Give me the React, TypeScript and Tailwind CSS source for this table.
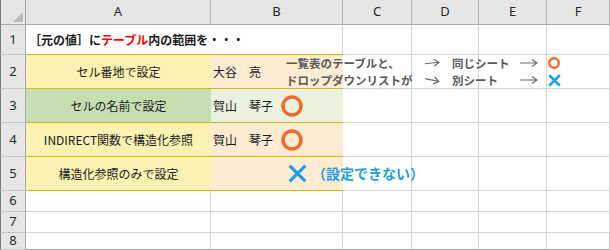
import type { ReactNode } from 'react';

// Spreadsheet widths (each includes its 1px right border)
// row header 26 | A 185 | B 132 | C 69 | D 67 | E 68 | F 63

const hdrCell =
  'flex items-center justify-center bg-[#e6e6e6] border-r border-b border-r-[#b4b4b4] border-b-[#a9a9a9] text-[13px] text-[#262626]';
const rowHdr =
  'flex w-[26px] shrink-0 items-center justify-center border-l border-r border-b border-l-[#6f7f75] border-r-[#a9a9a9] border-b-[#c6c6c6] bg-[#e6e6e6] text-[13px] text-[#262626] font-["Noto_Sans",sans-serif]';
const grid = 'border-r border-b border-[#d4d4d4]';

function Arrow({ className }: { className?: string }) {
  return (
    <svg width="16" height="10" viewBox="0 0 16 10" className={className}>
      <path d="M1 5H15M10 1.5L15 5L10 8.5" fill="none" stroke="#6a6a6a" strokeWidth="1.2" />
    </svg>
  );
}

function LongArrow() {
  return (
    <svg width="19" height="10" viewBox="0 0 19 10" className="shrink-0">
      <path d="M1 5H18M13 1.5L18 5L13 8.5" fill="none" stroke="#6a6a6a" strokeWidth="1.2" />
    </svg>
  );
}

function Circle({ size, r, w }: { size: number; r: number; w: number }) {
  return (
    <svg width={size} height={size} viewBox={`0 0 ${size} ${size}`} className="shrink-0">
      <circle cx={size / 2} cy={size / 2} r={r} fill="none" stroke="#f06a2c" strokeWidth={w} />
    </svg>
  );
}

function Cross({ size, w }: { size: number; w: number }) {
  const p = w / 2;
  return (
    <svg width={size} height={size} viewBox={`0 0 ${size} ${size}`} className="shrink-0">
      <path
        d={`M${p} ${p}L${size - p} ${size - p}M${size - p} ${p}L${p} ${size - p}`}
        stroke="#1e9fe3"
        strokeWidth={w}
      />
    </svg>
  );
}

function EmptyTail() {
  return (
    <>
      <div className={`w-[69px] ${grid}`} />
      <div className={`w-[67px] ${grid}`} />
      <div className={`w-[68px] ${grid}`} />
      <div className={`w-[63px] ${grid}`} />
    </>
  );
}

function Row({ n, h, children }: { n: number; h: string; children: ReactNode }) {
  return (
    <div className={`flex ${h}`}>
      <div className={rowHdr}>{n}</div>
      {children}
    </div>
  );
}

export default function App() {
  return (
    <div className="h-[250px] w-[610px] overflow-hidden bg-white font-['Noto_Sans_CJK_JP',sans-serif] text-[12px] text-[#1a1a1a]">
      {/* column headers */}
      <div className="flex h-[25px] font-['Noto_Sans',sans-serif]">
        <div className="relative w-[26px] border-l border-r border-b border-l-[#6f7f75] border-r-[#a9a9a9] border-b-[#a9a9a9] bg-[#e6e6e6]">
          <svg width="10" height="10" viewBox="0 0 10 10" className="absolute bottom-[2px] right-[2px]">
            <path d="M10 0V10H0Z" fill="#b9b9b9" />
          </svg>
        </div>
        <div className={`w-[185px] ${hdrCell}`}>A</div>
        <div className={`w-[132px] ${hdrCell}`}>B</div>
        <div className={`w-[69px] ${hdrCell}`}>C</div>
        <div className={`w-[67px] ${hdrCell}`}>D</div>
        <div className={`w-[68px] ${hdrCell}`}>E</div>
        <div className={`w-[63px] ${hdrCell}`}>F</div>
      </div>

      <Row n={1} h="h-[30px]">
        <div className="flex w-[185px] items-center border-b border-b-[#dcb40a] pl-[3px]">
          <span className="relative z-10 whitespace-nowrap text-[12px] font-bold">
            ［元の値］に<span className="text-[#ff0000]">テーブル</span>内の範囲を・・・
          </span>
        </div>
        <div className="w-[132px] border-r border-b border-r-[#d4d4d4] border-b-[#dcb40a]" />
        <EmptyTail />
      </Row>

      <Row n={2} h="h-[34px]">
        <div className="flex w-[185px] items-center justify-center border-b border-b-[#dcb40a] bg-[#fbf1b3]">
          セル番地で設定
        </div>
        <div className="flex w-[132px] items-center border-b border-b-[#dcb40a] bg-[#fdebd2] pl-[2px]">
          <span className="shrink-0 whitespace-nowrap">大谷　亮</span>
          <div className="relative z-10 ml-[25px] flex shrink-0 flex-col whitespace-nowrap text-[11.5px] font-bold leading-[17px] text-[#595959]">
            <div className="flex items-center">
              <span className="w-[136px]">一覧表のテーブルと、</span>
              <Arrow className="ml-[2px] shrink-0 -rotate-6" />
              <span className="ml-[12px] w-[67px]">同じシート</span>
              <LongArrow />
              <span className="ml-[10px] flex">
                <Circle size={12} r={4.8} w={2.4} />
              </span>
            </div>
            <div className="flex items-center">
              <span className="w-[136px]">ドロップダウンリストが</span>
              <Arrow className="ml-[2px] shrink-0 rotate-12" />
              <span className="ml-[12px] w-[67px]">別シート</span>
              <LongArrow />
              <span className="ml-[10px] flex">
                <Cross size={13} w={2.5} />
              </span>
            </div>
          </div>
        </div>
        <EmptyTail />
      </Row>

      <Row n={3} h="h-[34px]">
        <div className="flex w-[185px] items-center justify-center border-b border-b-[#dcb40a] bg-[#c5dfb3]">
          セルの名前で設定
        </div>
        <div className="flex w-[132px] items-center border-b border-b-[#dcb40a] bg-[#ebf1df] pl-[2px]">
          <span className="whitespace-nowrap">賀山　琴子</span>
          <span className="ml-[8px] flex">
            <Circle size={22} r={9} w={3.5} />
          </span>
        </div>
        <EmptyTail />
      </Row>

      <Row n={4} h="h-[34px]">
        <div className="flex w-[185px] items-center justify-center border-b border-b-[#dcb40a] bg-[#fbf1b3]">
          INDIRECT関数で構造化参照
        </div>
        <div className="flex w-[132px] items-center border-b border-b-[#dcb40a] bg-[#fdebd2] pl-[2px]">
          <span className="whitespace-nowrap">賀山　琴子</span>
          <span className="ml-[8px] flex">
            <Circle size={22} r={9} w={3.5} />
          </span>
        </div>
        <EmptyTail />
      </Row>

      <Row n={5} h="h-[34px]">
        <div className="flex w-[185px] items-center justify-center border-b border-b-[#dcb40a] bg-[#fbf1b3]">
          構造化参照のみで設定
        </div>
        <div className="flex w-[132px] items-center border-b border-b-[#dcb40a] bg-[#fdebd2] pl-[77px]">
          <Cross size={19} w={3.2} />
          <span className="relative z-10 ml-[5px] shrink-0 whitespace-nowrap text-[14px] font-bold text-[#1e9fe3]">
            （設定できない）
          </span>
        </div>
        <EmptyTail />
      </Row>

      {[6, 7].map((n) => (
        <Row key={n} n={n} h="h-[21px]">
          <div className={`w-[185px] ${grid}`} />
          <div className={`w-[132px] ${grid}`} />
          <EmptyTail />
        </Row>
      ))}

      <div className="flex h-[17px]">
        <div className={`${rowHdr} border-b-[#a0a0a0]`}>8</div>
        <div className="w-[185px] border-r border-b border-r-[#d4d4d4] border-b-[#a0a0a0]" />
        <div className="w-[132px] border-r border-b border-r-[#d4d4d4] border-b-[#a0a0a0]" />
        <div className="w-[69px] border-r border-b border-r-[#d4d4d4] border-b-[#a0a0a0]" />
        <div className="w-[67px] border-r border-b border-r-[#d4d4d4] border-b-[#a0a0a0]" />
        <div className="w-[68px] border-r border-b border-r-[#d4d4d4] border-b-[#a0a0a0]" />
        <div className="w-[63px] border-r border-b border-r-[#c4c4c4] border-b-[#a0a0a0]" />
      </div>
    </div>
  );
}
